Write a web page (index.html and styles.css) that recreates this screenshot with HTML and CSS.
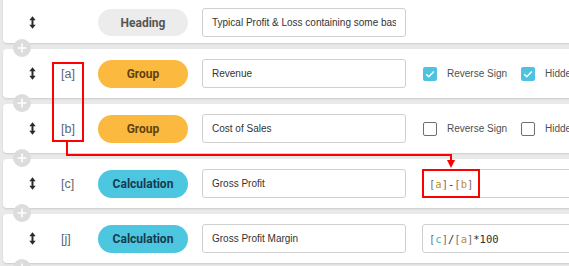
FILE: index.html
```html
<!DOCTYPE html>
<html lang="en">
<head>
  <meta charset="UTF-8" />
  <meta name="viewport" content="width=device-width, initial-scale=1.0" />
  <title>Report Lines</title>
  <link rel="stylesheet" href="styles.css">
</head>
<body>
  <div class="lines">
    <div class="line first">
      <span class="drag"><svg width="7" height="13" viewBox="0 0 7 13"><path d="M3.5 2v9" stroke="#2b2b2b" stroke-width="2"/><path d="M0.3 4.2L3.5 0.3L6.7 4.2Z M0.3 8.8L3.5 12.7L6.7 8.8Z" fill="#2b2b2b"/></svg></span>
      <span class="ref"></span>
      <span class="pill heading">Heading</span>
      <input class="name" type="text" value="Typical Profit &amp; Loss containing some basic calculations" readonly>
      <span class="add"><svg width="18" height="18" viewBox="0 0 18 18"><path d="M9 4.5v9M4.5 9h9" stroke="#fff" stroke-width="1.6"/></svg></span>
    </div>

    <div class="line">
      <span class="drag"><svg width="7" height="13" viewBox="0 0 7 13"><path d="M3.5 2v9" stroke="#2b2b2b" stroke-width="2"/><path d="M0.3 4.2L3.5 0.3L6.7 4.2Z M0.3 8.8L3.5 12.7L6.7 8.8Z" fill="#2b2b2b"/></svg></span>
      <span class="ref">[a]</span>
      <span class="pill group">Group</span>
      <input class="name" type="text" value="Revenue" readonly>
      <span class="opt"><span class="box checked"><svg width="14" height="14" viewBox="0 0 14 14"><path d="M3.2 7.2l2.6 2.5 5-5.2" fill="none" stroke="#fff" stroke-width="1.5"/></svg></span>Reverse Sign</span>
      <span class="opt"><span class="box checked"><svg width="14" height="14" viewBox="0 0 14 14"><path d="M3.2 7.2l2.6 2.5 5-5.2" fill="none" stroke="#fff" stroke-width="1.5"/></svg></span>Hidden</span>
      <span class="add"><svg width="18" height="18" viewBox="0 0 18 18"><path d="M9 4.5v9M4.5 9h9" stroke="#fff" stroke-width="1.6"/></svg></span>
    </div>

    <div class="line">
      <span class="drag"><svg width="7" height="13" viewBox="0 0 7 13"><path d="M3.5 2v9" stroke="#2b2b2b" stroke-width="2"/><path d="M0.3 4.2L3.5 0.3L6.7 4.2Z M0.3 8.8L3.5 12.7L6.7 8.8Z" fill="#2b2b2b"/></svg></span>
      <span class="ref">[b]</span>
      <span class="pill group">Group</span>
      <input class="name" type="text" value="Cost of Sales" readonly>
      <span class="opt"><span class="box"></span>Reverse Sign</span>
      <span class="opt"><span class="box"></span>Hidden</span>
      <span class="add"><svg width="18" height="18" viewBox="0 0 18 18"><path d="M9 4.5v9M4.5 9h9" stroke="#fff" stroke-width="1.6"/></svg></span>
    </div>

    <div class="line">
      <span class="drag"><svg width="7" height="13" viewBox="0 0 7 13"><path d="M3.5 2v9" stroke="#2b2b2b" stroke-width="2"/><path d="M0.3 4.2L3.5 0.3L6.7 4.2Z M0.3 8.8L3.5 12.7L6.7 8.8Z" fill="#2b2b2b"/></svg></span>
      <span class="ref">[c]</span>
      <span class="pill calc">Calculation</span>
      <input class="name" type="text" value="Gross Profit" readonly>
      <div class="formula"><span class="br">[</span><span class="va">a</span><span class="br">]</span>-<span class="br">[</span><span class="va">b</span><span class="br">]</span></div>
      <span class="add"><svg width="18" height="18" viewBox="0 0 18 18"><path d="M9 4.5v9M4.5 9h9" stroke="#fff" stroke-width="1.6"/></svg></span>
    </div>

    <div class="line">
      <span class="drag"><svg width="7" height="13" viewBox="0 0 7 13"><path d="M3.5 2v9" stroke="#2b2b2b" stroke-width="2"/><path d="M0.3 4.2L3.5 0.3L6.7 4.2Z M0.3 8.8L3.5 12.7L6.7 8.8Z" fill="#2b2b2b"/></svg></span>
      <span class="ref">[j]</span>
      <span class="pill calc">Calculation</span>
      <input class="name" type="text" value="Gross Profit Margin" readonly>
      <div class="formula"><span class="br">[</span><span class="vc">c</span><span class="br">]</span>/<span class="br">[</span><span class="va">a</span><span class="br">]</span>*100</div>
      <span class="add"><svg width="18" height="18" viewBox="0 0 18 18"><path d="M9 4.5v9M4.5 9h9" stroke="#fff" stroke-width="1.6"/></svg></span>
    </div>
  </div>

  <!-- annotation: refs [a] and [b] feed the formula -->
  <svg class="note" width="569" height="266" viewBox="0 0 569 266">
    <rect x="53" y="63" width="30" height="78" fill="none" stroke="#ff0000" stroke-width="2"/>
    <polyline points="67,142 67,155 451,155 451,161" fill="none" stroke="#ff0000" stroke-width="2"/>
    <polygon points="447,160 455,160 451,168" fill="#ff0000"/>
    <rect x="423" y="170" width="56" height="27" fill="none" stroke="#ff0000" stroke-width="2"/>
  </svg>
</body>
</html>
```

FILE: styles.css
```css
body { margin: 0; background: #e9e9e9; font-family: "Liberation Sans", Arial, sans-serif; overflow: hidden; }
.lines { margin-top: -6px; padding-left: 3px; width: 760px; }
.line {
  position: relative;
  display: flex;
  align-items: center;
  box-sizing: border-box;
  height: 49px;
  margin-bottom: 6px;
  padding-left: 26px;
  background: white;
  border-radius: 4px;
  box-shadow: 0 1px 2px rgba(0,0,0,0.13);
}
.line.first { padding-top: 8px; }
.drag { width: 7px; height: 13px; display: flex; }
.ref { width: 37px; margin-left: 25px; font-size: 12.5px; color: #5d6474; }
.pill {
  width: 90px;
  height: 28px;
  border-radius: 14px;
  display: flex;
  align-items: center;
  justify-content: center;
  font-family: Roboto, sans-serif;
  font-weight: 700;
  font-size: 12px;
}
.pill.heading { background: #ececec; color: #555; height: 27px; }
.pill.group { background: #fbb940; color: #5e4410; }
.pill.calc { background: #4dc6e0; color: #173a4e; }
.name {
  box-sizing: border-box;
  width: 204px;
  height: 29px;
  margin-left: 14px;
  padding: 0 9px;
  border: 1px solid #cfcfcf;
  border-radius: 3px;
  font-family: "Liberation Sans", Arial, sans-serif;
  font-size: 10px;
  color: #333;
  outline: none;
}
.opt { display: flex; align-items: center; gap: 10px; margin-left: 17px; font-size: 10px; color: #4f4f4f; }
.opt + .opt { margin-left: 14px; }
.box { box-sizing: border-box; width: 14px; height: 14px; border: 1.5px solid #6f6f6f; border-radius: 2px; display: flex; }
.box.checked { border: none; background: #4dc3e0; }
.formula {
  box-sizing: border-box;
  width: 240px;
  height: 29px;
  margin-left: 16px;
  padding: 0 6px;
  display: flex;
  align-items: center;
  border: 1px solid #cfcfcf;
  border-radius: 3px;
  font-family: "DejaVu Sans Mono", monospace;
  font-size: 10.5px;
  color: #2f2f2f;
}
.br { color: #707070; }
.va { color: #c48c22; }
.vc { color: #3cb2d2; }
.add {
  position: absolute;
  left: 10px;
  bottom: -14px;
  z-index: 1;
  width: 18px;
  height: 18px;
  border-radius: 50%;
  background: #dcdcdc;
  display: flex;
}
.note { position: absolute; top: 0; left: 0; pointer-events: none; z-index: 2; }
```
